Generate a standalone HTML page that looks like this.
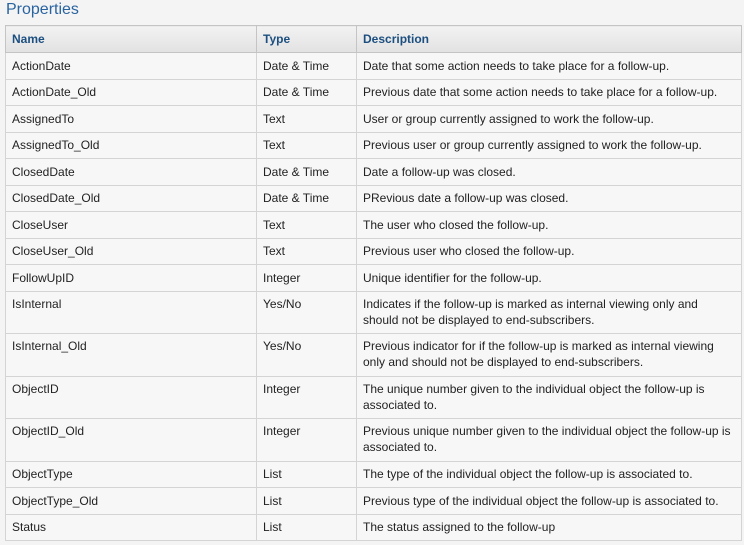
<!DOCTYPE html>
<html><head><style>
body{margin:0;background:#f4f4f4;font-family:"Liberation Sans",sans-serif;width:744px;height:545px;overflow:hidden}
h1{position:absolute;left:6px;top:0px;margin:0;font-weight:normal;font-size:16px;color:#2a64a0;line-height:20px}
table{position:absolute;left:5px;top:25px;width:737px;border-collapse:collapse;table-layout:fixed;background:#f7f7f7}
td,th{border:1px solid #d4d4d4;font-size:12px;color:#222;padding:0 6px;text-align:left;vertical-align:middle;white-space:nowrap;line-height:16px;box-sizing:border-box}
th{height:27px;background:linear-gradient(#f2f2f2,#e2e2e2);color:#1c4f80;font-weight:bold;border-color:#c4c4c4}
tr.s td{height:26.5px}
tr.d td{height:42.5px;vertical-align:top;padding-top:4px}
</style></head><body>
<h1>Properties</h1>
<table>
<col style="width:251px"><col style="width:100px"><col>
<tr><th>Name</th><th>Type</th><th>Description</th></tr>
<tr class="s"><td>ActionDate</td><td>Date &amp; Time</td><td>Date that some action needs to take place for a follow-up.</td></tr>
<tr class="s"><td>ActionDate_Old</td><td>Date &amp; Time</td><td>Previous date that some action needs to take place for a follow-up.</td></tr>
<tr class="s"><td>AssignedTo</td><td>Text</td><td>User or group currently assigned to work the follow-up.</td></tr>
<tr class="s"><td>AssignedTo_Old</td><td>Text</td><td>Previous user or group currently assigned to work the follow-up.</td></tr>
<tr class="s"><td>ClosedDate</td><td>Date &amp; Time</td><td>Date a follow-up was closed.</td></tr>
<tr class="s"><td>ClosedDate_Old</td><td>Date &amp; Time</td><td>PRevious date a follow-up was closed.</td></tr>
<tr class="s"><td>CloseUser</td><td>Text</td><td>The user who closed the follow-up.</td></tr>
<tr class="s"><td>CloseUser_Old</td><td>Text</td><td>Previous user who closed the follow-up.</td></tr>
<tr class="s"><td>FollowUpID</td><td>Integer</td><td>Unique identifier for the follow-up.</td></tr>
<tr class="d"><td>IsInternal</td><td>Yes/No</td><td>Indicates if the follow-up is marked as internal viewing only and<br>should not be displayed to end-subscribers.</td></tr>
<tr class="d"><td>IsInternal_Old</td><td>Yes/No</td><td>Previous indicator for if the follow-up is marked as internal viewing<br>only and should not be displayed to end-subscribers.</td></tr>
<tr class="d"><td>ObjectID</td><td>Integer</td><td>The unique number given to the individual object the follow-up is<br>associated to.</td></tr>
<tr class="d"><td>ObjectID_Old</td><td>Integer</td><td>Previous unique number given to the individual object the follow-up is<br>associated to.</td></tr>
<tr class="s"><td>ObjectType</td><td>List</td><td>The type of the individual object the follow-up is associated to.</td></tr>
<tr class="s"><td>ObjectType_Old</td><td>List</td><td>Previous type of the individual object the follow-up is associated to.</td></tr>
<tr class="s"><td>Status</td><td>List</td><td>The status assigned to the follow-up</td></tr>
</table>
</body></html>
